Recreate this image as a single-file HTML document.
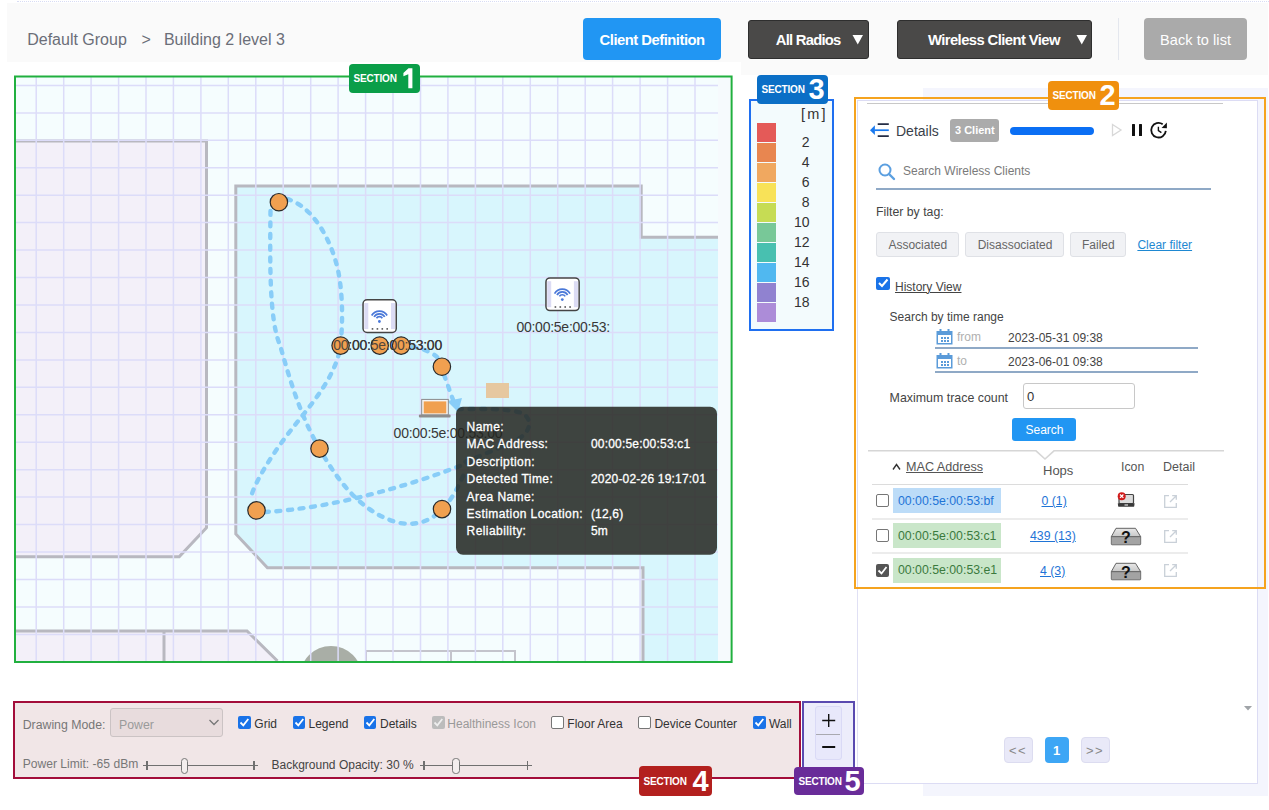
<!DOCTYPE html><html><head><meta charset="utf-8"><style>
html,body{margin:0;padding:0;width:1269px;height:810px;overflow:hidden;background:#fff;font-family:"Liberation Sans", sans-serif;}
.t{position:absolute;white-space:pre;line-height:1;}
.r{position:absolute;box-sizing:border-box;}
svg{position:absolute;}
</style></head><body>

<div class="r" style="left:17px;top:1px;width:1252px;height:2px;border-top:1px dotted #d8dcf4"></div>
<div class="r" style="left:7px;top:3px;width:1261px;height:59px;background:#fafafa"></div>
<div class="r" style="left:741px;top:62px;width:527px;height:13px;background:#fafafa"></div>
<div class="t" style="left:27.2px;top:31.5px;font-size:16px;color:#6b6e78;font-weight:normal;">Default Group</div>
<div class="t" style="left:141.5px;top:31.5px;font-size:16px;color:#6b6e78;font-weight:normal;">&gt;</div>
<div class="t" style="left:163.9px;top:31.5px;font-size:16px;color:#6b6e78;font-weight:normal;">Building 2 level 3</div>
<div class="r" style="left:583px;top:18px;width:138px;height:42px;background:#2196f3;border-radius:4px"></div>
<div class="t" style="left:599.6px;top:32.7px;font-size:14.8px;color:#fff;font-weight:bold;letter-spacing:-0.497px;">Client Definition</div>
<div class="r" style="left:748px;top:19.5px;width:121px;height:39.0px;background:#4a4948;border:1px solid #2e2e2e;border-radius:3px"></div>
<div class="t" style="left:775.8px;top:32.6px;font-size:14.8px;color:#fff;font-weight:bold;letter-spacing:-0.763px;">All Radios</div>
<svg style="left:852px;top:35px" width="12" height="10"><polygon points="0.5,0 11,0 5.75,9.5" fill="#fff"/></svg>
<div class="r" style="left:897px;top:19.5px;width:195px;height:39.0px;background:#4a4948;border:1px solid #2e2e2e;border-radius:3px"></div>
<div class="t" style="left:928.0px;top:32.7px;font-size:14.8px;color:#fff;font-weight:bold;letter-spacing:-0.581px;">Wireless Client View</div>
<svg style="left:1076px;top:35px" width="12" height="10"><polygon points="0.5,0 11,0 5.75,9.5" fill="#fff"/></svg>
<div class="r" style="left:1118px;top:18px;width:1px;height:42px;background:#e4e7ee"></div>
<div class="r" style="left:1144px;top:18px;width:103px;height:42px;background:#aaaaaa;border-radius:4px"></div>
<div class="t" style="left:1160.0px;top:32.9px;font-size:14.5px;color:#fff;font-weight:normal;letter-spacing:0.081px;">Back to list</div>
<svg style="left:0;top:0" width="740" height="670" viewBox="0 0 740 670"><rect x="16" y="77" width="714" height="584" fill="#f6fafd"/><rect x="16" y="77" width="702" height="584" fill="#f5fdfe"/><polygon points="16,141 206.5,141 206.5,527.7 179.2,556.7 16,556.7" fill="#f3f0f9"/><polygon points="16,631 247,631 277.5,661 16,661" fill="#f3f0f9"/><polygon points="235.8,186 641.2,186 641.2,237.3 718,237.3 718,661 643,661 643,567.7 267.4,567.7 235.8,534" fill="#d8f6fd"/><polyline points="16,141 206.5,141 206.5,527.7 179.2,556.7 16,556.7" fill="none" stroke="#b8b8c0" stroke-width="3" stroke-linejoin="miter"/><polyline points="16,631 247,631 277.5,661" fill="none" stroke="#b8b8c0" stroke-width="3" stroke-linejoin="miter"/><polyline points="164,632 164,661" fill="none" stroke="#b8b8c0" stroke-width="3" stroke-linejoin="miter"/><polyline points="718,237.3 641.2,237.3 641.2,186 235.8,186 235.8,534 267.4,567.7 643,567.7 643,661" fill="none" stroke="#b8b8c0" stroke-width="3" stroke-linejoin="miter"/><polyline points="366,661 366,651 515,651 515,661" fill="none" stroke="#c4c4cc" stroke-width="2"/><line x1="451" y1="651" x2="451" y2="661" stroke="#c4c4cc" stroke-width="2"/><clipPath id="mc"><rect x="16" y="77" width="702" height="584"/></clipPath><circle cx="331" cy="677" r="31" fill="#a9aea6" clip-path="url(#mc)"/><g stroke="#dcdcf9" stroke-width="1.5"><line x1="36.2" y1="77" x2="36.2" y2="661"/><line x1="63.7" y1="77" x2="63.7" y2="661"/><line x1="91.1" y1="77" x2="91.1" y2="661"/><line x1="118.6" y1="77" x2="118.6" y2="661"/><line x1="146.0" y1="77" x2="146.0" y2="661"/><line x1="173.4" y1="77" x2="173.4" y2="661"/><line x1="200.9" y1="77" x2="200.9" y2="661"/><line x1="228.3" y1="77" x2="228.3" y2="661"/><line x1="255.8" y1="77" x2="255.8" y2="661"/><line x1="283.2" y1="77" x2="283.2" y2="661"/><line x1="310.7" y1="77" x2="310.7" y2="661"/><line x1="338.1" y1="77" x2="338.1" y2="661"/><line x1="365.6" y1="77" x2="365.6" y2="661"/><line x1="393.0" y1="77" x2="393.0" y2="661"/><line x1="420.5" y1="77" x2="420.5" y2="661"/><line x1="447.9" y1="77" x2="447.9" y2="661"/><line x1="475.4" y1="77" x2="475.4" y2="661"/><line x1="502.8" y1="77" x2="502.8" y2="661"/><line x1="530.3" y1="77" x2="530.3" y2="661"/><line x1="557.7" y1="77" x2="557.7" y2="661"/><line x1="585.2" y1="77" x2="585.2" y2="661"/><line x1="612.6" y1="77" x2="612.6" y2="661"/><line x1="640.1" y1="77" x2="640.1" y2="661"/><line x1="667.6" y1="77" x2="667.6" y2="661"/><line x1="695.0" y1="77" x2="695.0" y2="661"/><line x1="16" y1="85.4" x2="718" y2="85.4"/><line x1="16" y1="112.9" x2="718" y2="112.9"/><line x1="16" y1="140.3" x2="718" y2="140.3"/><line x1="16" y1="167.8" x2="718" y2="167.8"/><line x1="16" y1="195.2" x2="718" y2="195.2"/><line x1="16" y1="222.6" x2="718" y2="222.6"/><line x1="16" y1="250.1" x2="718" y2="250.1"/><line x1="16" y1="277.5" x2="718" y2="277.5"/><line x1="16" y1="305.0" x2="718" y2="305.0"/><line x1="16" y1="332.4" x2="718" y2="332.4"/><line x1="16" y1="359.9" x2="718" y2="359.9"/><line x1="16" y1="387.3" x2="718" y2="387.3"/><line x1="16" y1="414.8" x2="718" y2="414.8"/><line x1="16" y1="442.2" x2="718" y2="442.2"/><line x1="16" y1="469.7" x2="718" y2="469.7"/><line x1="16" y1="497.1" x2="718" y2="497.1"/><line x1="16" y1="524.6" x2="718" y2="524.6"/><line x1="16" y1="552.0" x2="718" y2="552.0"/><line x1="16" y1="579.5" x2="718" y2="579.5"/><line x1="16" y1="607.0" x2="718" y2="607.0"/><line x1="16" y1="634.4" x2="718" y2="634.4"/></g><rect x="15" y="76.5" width="716.6" height="585.5" fill="none" stroke="#21b03f" stroke-width="2"/><path d="M270.5 211 C270 260 269 320 280 345 C290 380 300 415 319.5 448.6 C340 485 365 515 400 523 C425 527 440 515 452 497 C458 488 462 478 466 470" fill="none" stroke="#88cdf8" stroke-width="4.4" stroke-dasharray="4 7.6" stroke-linecap="round"/><path d="M287 199 C310 205 330 235 338 270 C344 300 342 330 340.6 345.6 C336 375 315 400 295 425 C275 450 255 480 250 500" fill="none" stroke="#88cdf8" stroke-width="4.4" stroke-dasharray="4 7.6" stroke-linecap="round"/><path d="M265 512 C300 510 340 503 380 492 C410 484 440 474 470 462" fill="none" stroke="#88cdf8" stroke-width="4.4" stroke-dasharray="4 7.6" stroke-linecap="round"/><path d="M401 346 C415 346 430 350 438 358" fill="none" stroke="#88cdf8" stroke-width="4.4" stroke-dasharray="4 7.6" stroke-linecap="round"/><path d="M444 375 C448 385 451 395 455 405" fill="none" stroke="#88cdf8" stroke-width="4.4" stroke-dasharray="4 7.6" stroke-linecap="round"/><path d="M458 409 C480 409 505 408 522 413 C533 419 531 432 518 439 C500 448 480 456 462 463" fill="none" stroke="#88cdf8" stroke-width="4.4" stroke-dasharray="4 7.6" stroke-linecap="round"/><polygon points="447,401 462,398 458,412" fill="#88cdf8"/><circle cx="278.9" cy="202.2" r="8.7" fill="#f0a050" stroke="#2a2a2a" stroke-width="1.2"/><circle cx="441.9" cy="366.7" r="8.7" fill="#f0a050" stroke="#2a2a2a" stroke-width="1.2"/><circle cx="319.5" cy="448.6" r="8.7" fill="#f0a050" stroke="#2a2a2a" stroke-width="1.2"/><circle cx="256.5" cy="510.4" r="8.7" fill="#f0a050" stroke="#2a2a2a" stroke-width="1.2"/><circle cx="442" cy="509.1" r="8.7" fill="#f0a050" stroke="#2a2a2a" stroke-width="1.2"/><rect x="363.05" y="299.85" width="33.2" height="32.6" rx="4" fill="#fff" stroke="#454545" stroke-width="1.5"/><rect x="364.3" y="303.1" width="4" height="26" fill="#dcdcf4"/><rect x="391.0" y="303.1" width="4" height="26" fill="#dcdcf4"/><path d="M371.66 315.50 A9 9 0 0 1 387.14 315.50" fill="none" stroke="#4a78d8" stroke-width="1.7"/><path d="M374.07 316.90 A6.2 6.2 0 0 1 384.73 316.90" fill="none" stroke="#4a78d8" stroke-width="1.7"/><path d="M376.48 318.30 A3.4 3.4 0 0 1 382.32 318.30" fill="none" stroke="#4a78d8" stroke-width="1.7"/><circle cx="379.40000000000003" cy="321.5" r="1.4" fill="#4a78d8"/><rect x="371.7" y="328.1" width="1.6" height="1.6" fill="#555"/><rect x="376.6" y="328.1" width="1.6" height="1.6" fill="#555"/><rect x="381.5" y="328.1" width="1.6" height="1.6" fill="#555"/><rect x="386.4" y="328.1" width="1.6" height="1.6" fill="#555"/><rect x="545.95" y="277.95" width="33.2" height="32.6" rx="4" fill="#fff" stroke="#454545" stroke-width="1.5"/><rect x="547.2" y="281.2" width="4" height="26" fill="#dcdcf4"/><rect x="573.9000000000001" y="281.2" width="4" height="26" fill="#dcdcf4"/><path d="M554.56 293.60 A9 9 0 0 1 570.04 293.60" fill="none" stroke="#4a78d8" stroke-width="1.7"/><path d="M556.97 295.00 A6.2 6.2 0 0 1 567.63 295.00" fill="none" stroke="#4a78d8" stroke-width="1.7"/><path d="M559.38 296.40 A3.4 3.4 0 0 1 565.22 296.40" fill="none" stroke="#4a78d8" stroke-width="1.7"/><circle cx="562.3000000000001" cy="299.59999999999997" r="1.4" fill="#4a78d8"/><rect x="554.6" y="306.2" width="1.6" height="1.6" fill="#555"/><rect x="559.5" y="306.2" width="1.6" height="1.6" fill="#555"/><rect x="564.4" y="306.2" width="1.6" height="1.6" fill="#555"/><rect x="569.3" y="306.2" width="1.6" height="1.6" fill="#555"/><text x="333.3" y="350" font-family="Liberation Sans, sans-serif" font-size="14" letter-spacing="-0.25" fill="#383838">00:00:5e:00:53:00</text><text x="516.4" y="332" font-family="Liberation Sans, sans-serif" font-size="14" letter-spacing="-0.25" fill="#383838">00:00:5e:00:53:</text><circle cx="340.6" cy="345.6" r="8.7" fill="#f0a050" stroke="#2a2a2a" stroke-width="1.2" opacity="1"/><circle cx="379.7" cy="345.6" r="8.7" fill="#f0a050" stroke="#2a2a2a" stroke-width="1.2" opacity="1"/><circle cx="401.1" cy="345.6" r="8.7" fill="#f0a050" stroke="#2a2a2a" stroke-width="1.2" opacity="1"/><text x="333.3" y="350" font-family="Liberation Sans, sans-serif" font-size="14" letter-spacing="-0.25" fill="#383838" opacity="0.85">00:00:5e:00:53:00</text><rect x="421.7" y="399.4" width="26.6" height="15.6" fill="#f5f5f5" stroke="#8a8a8a" stroke-width="1"/><rect x="423.7" y="401.4" width="22.6" height="12" fill="#f0a050"/><rect x="418.9" y="414.6" width="31.7" height="2.8" rx="1" fill="#8d8d8d"/><text x="393.6" y="437.5" font-family="Liberation Sans, sans-serif" font-size="14" letter-spacing="-0.25" fill="#383838">00:00:5e:00:53:00</text><rect x="486" y="383" width="23" height="15" fill="#e6c8a0"/><rect x="456" y="406.8" width="261" height="148" rx="7" fill="#23241f" fill-opacity="0.85"/><text x="466.6" y="430.9" font-family="Liberation Sans, sans-serif" font-size="12" fill="#fff" stroke="#fff" stroke-width="0.3" letter-spacing="0.42">Name:</text><text x="466.6" y="448.3" font-family="Liberation Sans, sans-serif" font-size="12" fill="#fff" stroke="#fff" stroke-width="0.3" letter-spacing="0.42">MAC Address:</text><text x="590.9" y="448.3" font-family="Liberation Sans, sans-serif" font-size="12" fill="#fff" stroke="#fff" stroke-width="0.3" letter-spacing="0.2">00:00:5e:00:53:c1</text><text x="466.6" y="465.7" font-family="Liberation Sans, sans-serif" font-size="12" fill="#fff" stroke="#fff" stroke-width="0.3" letter-spacing="0.42">Description:</text><text x="466.6" y="483.1" font-family="Liberation Sans, sans-serif" font-size="12" fill="#fff" stroke="#fff" stroke-width="0.3" letter-spacing="0.42">Detected Time:</text><text x="590.9" y="483.1" font-family="Liberation Sans, sans-serif" font-size="12" fill="#fff" stroke="#fff" stroke-width="0.3" letter-spacing="0.2">2020-02-26 19:17:01</text><text x="466.6" y="500.5" font-family="Liberation Sans, sans-serif" font-size="12" fill="#fff" stroke="#fff" stroke-width="0.3" letter-spacing="0.42">Area Name:</text><text x="466.6" y="517.9" font-family="Liberation Sans, sans-serif" font-size="12" fill="#fff" stroke="#fff" stroke-width="0.3" letter-spacing="0.42">Estimation Location:</text><text x="590.9" y="517.9" font-family="Liberation Sans, sans-serif" font-size="12" fill="#fff" stroke="#fff" stroke-width="0.3" letter-spacing="0.2">(12,6)</text><text x="466.6" y="535.3" font-family="Liberation Sans, sans-serif" font-size="12" fill="#fff" stroke="#fff" stroke-width="0.3" letter-spacing="0.42">Reliability:</text><text x="590.9" y="535.3" font-family="Liberation Sans, sans-serif" font-size="12" fill="#fff" stroke="#fff" stroke-width="0.3" letter-spacing="0.2">5m</text></svg>
<div class="r" style="left:749px;top:99px;width:85px;height:232px;background:#f3fbfd;border:2px solid #1f6ff0"></div>
<div class="r" style="left:757px;top:123px;width:19px;height:19px;background:#e45a58"></div>
<div class="r" style="left:757px;top:143px;width:19px;height:19px;background:#e88650"></div>
<div class="r" style="left:757px;top:163px;width:19px;height:19px;background:#f0a860"></div>
<div class="r" style="left:757px;top:183px;width:19px;height:19px;background:#f8e258"></div>
<div class="r" style="left:757px;top:203px;width:19px;height:19px;background:#c6dc54"></div>
<div class="r" style="left:757px;top:223px;width:19px;height:19px;background:#78c898"></div>
<div class="r" style="left:757px;top:243px;width:19px;height:19px;background:#48c0b0"></div>
<div class="r" style="left:757px;top:263px;width:19px;height:19px;background:#50b8f0"></div>
<div class="r" style="left:757px;top:283px;width:19px;height:19px;background:#9082d0"></div>
<div class="r" style="left:757px;top:303px;width:19px;height:19px;background:#ac8cd8"></div>
<div class="t" style="left:801.0px;top:107.2px;font-size:14.5px;color:#333;font-weight:normal;letter-spacing:2.2px">[m]</div>
<div class="t" style="left:801.7px;top:135.1px;font-size:14px;color:#333;font-weight:normal;">2</div>
<div class="t" style="left:801.7px;top:155.1px;font-size:14px;color:#333;font-weight:normal;">4</div>
<div class="t" style="left:801.7px;top:175.1px;font-size:14px;color:#333;font-weight:normal;">6</div>
<div class="t" style="left:801.7px;top:195.1px;font-size:14px;color:#333;font-weight:normal;">8</div>
<div class="t" style="left:793.9px;top:215.1px;font-size:14px;color:#333;font-weight:normal;">10</div>
<div class="t" style="left:793.9px;top:235.1px;font-size:14px;color:#333;font-weight:normal;">12</div>
<div class="t" style="left:793.9px;top:255.1px;font-size:14px;color:#333;font-weight:normal;">14</div>
<div class="t" style="left:793.9px;top:275.1px;font-size:14px;color:#333;font-weight:normal;">16</div>
<div class="t" style="left:793.9px;top:295.1px;font-size:14px;color:#333;font-weight:normal;">18</div>
<div class="r" style="left:923px;top:88px;width:345px;height:708px;background:#f4f5fd"></div>
<div class="r" style="left:857px;top:100px;width:401px;height:684px;background:#fff;border:1px solid #dcdcf4"></div>
<div class="r" style="left:867px;top:103px;width:356px;height:1px;background:#c8c8c8"></div>
<div class="r" style="left:854px;top:97px;width:412px;height:492px;border:2px solid #f5a31f"></div>
<svg style="left:864px;top:115px" width="30" height="28" viewBox="0 0 30 28"><path d="M13.7 9.2 H24.8 M13.7 21.1 H24.8" stroke="#252d45" stroke-width="1.7"/><path d="M10.5 15.2 H24.8" stroke="#1a7af0" stroke-width="1.7"/><polygon points="6,15.2 10.9,10.3 10.9,20.1" fill="#1a7af0"/></svg>
<div class="t" style="left:896.0px;top:124.1px;font-size:14px;color:#3a3f4a;font-weight:normal;">Details</div>
<div class="r" style="left:950px;top:119px;width:49px;height:23px;background:#ababab;border-radius:3px"></div>
<div class="t" style="left:955.0px;top:125.2px;font-size:11px;color:#fff;font-weight:bold;">3 Client</div>
<div class="r" style="left:1010px;top:126.8px;width:84px;height:8.200000000000003px;background:#0b6ff4;border-radius:4px"></div>
<svg style="left:1111px;top:123px" width="12" height="14"><polygon points="1.5,1.5 10,7 1.5,12.5" fill="none" stroke="#d8d8d8" stroke-width="1.3"/></svg>
<div class="r" style="left:1132px;top:124.4px;width:3.2999999999999545px;height:11.400000000000006px;background:#111;border-radius:0.5px"></div>
<div class="r" style="left:1139.2px;top:124.4px;width:3.2999999999999545px;height:11.400000000000006px;background:#111;border-radius:0.5px"></div>
<svg style="left:1148px;top:119px" width="22" height="22" viewBox="0 0 22 22"><path d="M14.7 5.2 A7.3 7.3 0 1 0 17.8 11.8" fill="none" stroke="#111" stroke-width="1.8"/><polygon points="18.9,3.6 13.6,9.1 18.9,9.3" fill="#111"/><path d="M10.4 7.8 V11.6 L13.4 13.6" fill="none" stroke="#111" stroke-width="1.4"/></svg>
<svg style="left:878px;top:162.5px" width="18" height="18" viewBox="0 0 18 18"><circle cx="7" cy="7" r="5.5" fill="none" stroke="#5b9fe0" stroke-width="2"/><path d="M11 11 L16 16" stroke="#5b9fe0" stroke-width="2.4" stroke-linecap="round"/></svg>
<div class="t" style="left:903.0px;top:164.8px;font-size:12px;color:#7a7a7a;font-weight:normal;">Search Wireless Clients</div>
<div class="r" style="left:876px;top:188px;width:335px;height:2px;background:#8fa9c6"></div>
<div class="t" style="left:876.0px;top:205.6px;font-size:12.3px;color:#444;font-weight:normal;">Filter by tag:</div>
<div class="r" style="left:876px;top:232px;width:83px;height:25px;background:#f1f2f5;border:1px solid #dfe1e6;border-radius:3px"></div>
<div class="t" style="left:888.4px;top:239.3px;font-size:12px;color:#666;font-weight:normal;">Associated</div>
<div class="r" style="left:965px;top:232px;width:99px;height:25px;background:#f1f2f5;border:1px solid #dfe1e6;border-radius:3px"></div>
<div class="t" style="left:977.7px;top:239.3px;font-size:12px;color:#666;font-weight:normal;">Disassociated</div>
<div class="r" style="left:1070px;top:232px;width:56px;height:25px;background:#f1f2f5;border:1px solid #dfe1e6;border-radius:3px"></div>
<div class="t" style="left:1082.0px;top:239.3px;font-size:12px;color:#666;font-weight:normal;">Failed</div>
<div class="t" style="left:1137.4px;top:239.3px;font-size:12px;color:#1e88d2;font-weight:normal;text-decoration:underline">Clear filter</div>
<div class="r" style="left:876px;top:276.5px;width:14px;height:13.5px;background:#1a73e8;border-radius:2px"></div>
<svg style="left:876px;top:276px" width="14" height="14"><path d="M3 7 L6 10 L11.5 3.5" fill="none" stroke="#fff" stroke-width="2"/></svg>
<div class="t" style="left:895.0px;top:280.8px;font-size:12px;color:#444;font-weight:normal;text-decoration:underline">History View</div>
<div class="t" style="left:889.6px;top:310.8px;font-size:12px;color:#444;font-weight:normal;">Search by time range</div>
<svg style="left:936px;top:329px" width="17" height="16" viewBox="0 0 17 16"><rect x="0.5" y="2" width="16" height="13.5" fill="#5b9bd9"/><rect x="2" y="6" width="13" height="8" fill="#fff"/><rect x="3.5" y="0" width="2" height="4" fill="#5b9bd9"/><rect x="11.5" y="0" width="2" height="4" fill="#5b9bd9"/><g fill="#5b9bd9"><rect x="5" y="8" width="2" height="2"/><rect x="8" y="8" width="2" height="2"/><rect x="11" y="8" width="2" height="2"/><rect x="5" y="11" width="2" height="2"/><rect x="8" y="11" width="2" height="2"/><rect x="11" y="11" width="2" height="2"/></g></svg>
<div class="t" style="left:957.0px;top:330.8px;font-size:12px;color:#b0b0b0;font-weight:normal;">from</div>
<div class="t" style="left:1008.0px;top:331.8px;font-size:12px;color:#444;font-weight:normal;">2023-05-31 09:38</div>
<div class="r" style="left:935px;top:347px;width:263px;height:2px;background:#8fa9c6"></div>
<svg style="left:936px;top:353px" width="17" height="16" viewBox="0 0 17 16"><rect x="0.5" y="2" width="16" height="13.5" fill="#5b9bd9"/><rect x="2" y="6" width="13" height="8" fill="#fff"/><rect x="3.5" y="0" width="2" height="4" fill="#5b9bd9"/><rect x="11.5" y="0" width="2" height="4" fill="#5b9bd9"/><g fill="#5b9bd9"><rect x="5" y="8" width="2" height="2"/><rect x="8" y="8" width="2" height="2"/><rect x="11" y="8" width="2" height="2"/><rect x="5" y="11" width="2" height="2"/><rect x="8" y="11" width="2" height="2"/><rect x="11" y="11" width="2" height="2"/></g></svg>
<div class="t" style="left:957.0px;top:354.8px;font-size:12px;color:#b0b0b0;font-weight:normal;">to</div>
<div class="t" style="left:1008.0px;top:355.8px;font-size:12px;color:#444;font-weight:normal;">2023-06-01 09:38</div>
<div class="r" style="left:935px;top:371px;width:263px;height:2px;background:#8fa9c6"></div>
<div class="t" style="left:889.6px;top:391.5px;font-size:12.4px;color:#444;font-weight:normal;">Maximum trace count</div>
<div class="r" style="left:1023px;top:382.5px;width:112px;height:26.0px;background:#fff;border:1px solid #c8c8c8;border-radius:3px"></div>
<div class="t" style="left:1027.0px;top:390.0px;font-size:13px;color:#333;font-weight:normal;">0</div>
<div class="r" style="left:1011.5px;top:418px;width:64.5px;height:23px;background:#2196f3;border-radius:3px"></div>
<div class="t" style="left:1025.5px;top:424.3px;font-size:12px;color:#fff;font-weight:normal;">Search</div>
<svg style="left:866px;top:444px" width="360" height="20"><path d="M2 6.8 H170 L179 15 L188 6.8 H358" fill="none" stroke="#d6d6d6" stroke-width="1.6"/></svg>
<svg style="left:892px;top:463px" width="9" height="8"><path d="M1 6.5 L4.5 1.5 L8 6.5" fill="none" stroke="#333" stroke-width="1.4"/></svg>
<div class="t" style="left:906.0px;top:461.3px;font-size:12.6px;color:#555;font-weight:normal;text-decoration:underline">MAC Address</div>
<div class="t" style="left:1043.0px;top:463.5px;font-size:13px;color:#555;font-weight:normal;">Hops</div>
<div class="t" style="left:1121.0px;top:461.1px;font-size:12.3px;color:#555;font-weight:normal;">Icon</div>
<div class="t" style="left:1163.0px;top:460.9px;font-size:12.5px;color:#555;font-weight:normal;">Detail</div>
<div class="r" style="left:872px;top:483.5px;width:316px;height:1.5px;background:#dcdcdc"></div>
<div class="r" style="left:872px;top:518px;width:316px;height:1.5px;background:#ececec"></div>
<div class="r" style="left:872px;top:552px;width:316px;height:1.5px;background:#ececec"></div>
<div class="r" style="left:876px;top:494.0px;width:13px;height:13.0px;background:#fff;border:1px solid #767676;border-radius:2px"></div>
<div class="r" style="left:893px;top:488px;width:107.5px;height:25px;background:#bcdcf8"></div>
<div class="t" style="left:898.0px;top:494.6px;font-size:12.3px;color:#1f74d6;font-weight:normal;">00:00:5e:00:53:bf</div>
<div class="t" style="left:1041.5px;top:495.1px;font-size:12.3px;color:#1f74d6;font-weight:normal;text-decoration:underline">0 (1)</div>
<svg style="left:1163px;top:492.5px" width="16" height="16" viewBox="0 0 16 16"><path d="M6 2.7 H1.7 V14.3 H13.3 V10" fill="none" stroke="#c9d0d8" stroke-width="1.3"/><path d="M7 9 L13.3 2.7 M9.2 2.7 H13.3 V6.8" fill="none" stroke="#c9d0d8" stroke-width="1.3"/></svg>
<div class="r" style="left:876px;top:529.0px;width:13px;height:13.0px;background:#fff;border:1px solid #767676;border-radius:2px"></div>
<div class="r" style="left:893px;top:523px;width:107.5px;height:25px;background:#c9e6c9"></div>
<div class="t" style="left:898.0px;top:529.6px;font-size:12.3px;color:#3b7a3d;font-weight:normal;">00:00:5e:00:53:c1</div>
<div class="t" style="left:1030.0px;top:530.1px;font-size:12.3px;color:#1f74d6;font-weight:normal;text-decoration:underline">439 (13)</div>
<svg style="left:1163px;top:527.5px" width="16" height="16" viewBox="0 0 16 16"><path d="M6 2.7 H1.7 V14.3 H13.3 V10" fill="none" stroke="#c9d0d8" stroke-width="1.3"/><path d="M7 9 L13.3 2.7 M9.2 2.7 H13.3 V6.8" fill="none" stroke="#c9d0d8" stroke-width="1.3"/></svg>
<div class="r" style="left:876px;top:563.7px;width:13px;height:13.0px;background:#555;border-radius:2px"></div>
<svg style="left:876px;top:563.7px" width="13" height="13"><path d="M2.5 6.5 L5.5 9.5 L10.5 3" fill="none" stroke="#fff" stroke-width="1.8"/></svg>
<div class="r" style="left:893px;top:557.7px;width:107.5px;height:25.0px;background:#c9e6c9"></div>
<div class="t" style="left:898.0px;top:564.3px;font-size:12.3px;color:#3b7a3d;font-weight:normal;">00:00:5e:00:53:e1</div>
<div class="t" style="left:1040.0px;top:564.8px;font-size:12.3px;color:#1f74d6;font-weight:normal;text-decoration:underline">4 (3)</div>
<svg style="left:1163px;top:562.2px" width="16" height="16" viewBox="0 0 16 16"><path d="M6 2.7 H1.7 V14.3 H13.3 V10" fill="none" stroke="#c9d0d8" stroke-width="1.3"/><path d="M7 9 L13.3 2.7 M9.2 2.7 H13.3 V6.8" fill="none" stroke="#c9d0d8" stroke-width="1.3"/></svg>
<svg style="left:1116px;top:490px" width="22" height="20" viewBox="0 0 22 20"><rect x="3" y="4.5" width="14.5" height="9" rx="1" fill="#dcdcdc" stroke="#444" stroke-width="1.2"/><path d="M1.8 13.2 H18.6 L18.2 16.2 Q18 16.8 17.4 16.8 H3 Q2.4 16.8 2.2 16.2 Z" fill="#3a3a3a"/><rect x="8.5" y="14.4" width="3.5" height="1.2" fill="#ddd"/><circle cx="5.7" cy="6.2" r="4" fill="#d21c1c"/><path d="M4 4.5 L7.4 7.9 M7.4 4.5 L4 7.9" stroke="#fff" stroke-width="1.2"/></svg>
<svg style="left:1110px;top:527px" width="32" height="19" viewBox="0 0 32 19"><defs><linearGradient id="qg" x1="0" y1="0" x2="0" y2="1"><stop offset="0" stop-color="#e8e8e8"/><stop offset="1" stop-color="#c8c8c8"/></linearGradient></defs><path d="M6 1.3 H25.5 L30.7 9.7 H1.3 Z" fill="url(#qg)" stroke="#555" stroke-width="0.9"/><path d="M1.3 9.7 H30.7 V17 Q30.7 17.8 30 17.8 H2 Q1.3 17.8 1.3 17 Z" fill="#a3a3a3" stroke="#666" stroke-width="0.9"/><text x="16" y="15.5" text-anchor="middle" font-family="Liberation Sans" font-weight="bold" font-size="16" fill="#111">?</text></svg>
<svg style="left:1110px;top:562px" width="32" height="19" viewBox="0 0 32 19"><defs><linearGradient id="qg" x1="0" y1="0" x2="0" y2="1"><stop offset="0" stop-color="#e8e8e8"/><stop offset="1" stop-color="#c8c8c8"/></linearGradient></defs><path d="M6 1.3 H25.5 L30.7 9.7 H1.3 Z" fill="url(#qg)" stroke="#555" stroke-width="0.9"/><path d="M1.3 9.7 H30.7 V17 Q30.7 17.8 30 17.8 H2 Q1.3 17.8 1.3 17 Z" fill="#a3a3a3" stroke="#666" stroke-width="0.9"/><text x="16" y="15.5" text-anchor="middle" font-family="Liberation Sans" font-weight="bold" font-size="16" fill="#111">?</text></svg>
<svg style="left:1243px;top:705px" width="10" height="7"><polygon points="1,1 9,1 5,5.5" fill="#a0a4a8"/></svg>
<div class="r" style="left:1004px;top:737px;width:29px;height:26px;background:#e9e9f8;border:1px solid #dcdcf0;border-radius:4px"></div>
<div class="t" style="left:1009.0px;top:744.0px;font-size:13px;color:#888;font-weight:normal;letter-spacing:1.5px">&lt;&lt;</div>
<div class="r" style="left:1044.5px;top:737px;width:24.5px;height:26px;background:#3da6f5;border-radius:4px"></div>
<div class="t" style="left:1053.0px;top:744.0px;font-size:13px;color:#fff;font-weight:bold;">1</div>
<div class="r" style="left:1081px;top:737px;width:29px;height:26px;background:#e9e9f8;border:1px solid #dcdcf0;border-radius:4px"></div>
<div class="t" style="left:1086.0px;top:744.0px;font-size:13px;color:#888;font-weight:normal;letter-spacing:1.5px">&gt;&gt;</div>
<div class="r" style="left:13px;top:701px;width:788px;height:78px;background:#f1e6e7;border:2px solid #a30d3a"></div>
<div class="t" style="left:22.7px;top:718.6px;font-size:12.3px;color:#777;font-weight:normal;">Drawing Mode:</div>
<div class="r" style="left:110px;top:707.5px;width:113px;height:29.0px;background:#e8dcdd;border:1px solid #cbc3c4;border-radius:3px"></div>
<div class="t" style="left:119.0px;top:718.6px;font-size:12.3px;color:#9a9a9a;font-weight:normal;">Power</div>
<svg style="left:208px;top:718px" width="12" height="9"><path d="M1.5 2 L6 6.5 L10.5 2" fill="none" stroke="#777" stroke-width="1.3"/></svg>
<div class="r" style="left:238.2px;top:716px;width:12.5px;height:12.5px;background:#1a73e8;border-radius:2px"></div>
<svg style="left:238.2px;top:716px" width="13" height="13"><path d="M2.5 6.5 L5.3 9.3 L10.3 3" fill="none" stroke="#fff" stroke-width="1.8"/></svg>
<div class="t" style="left:254.3px;top:718.3px;font-size:12px;color:#333;font-weight:normal;">Grid</div>
<div class="r" style="left:292.5px;top:716px;width:12.5px;height:12.5px;background:#1a73e8;border-radius:2px"></div>
<svg style="left:292.5px;top:716px" width="13" height="13"><path d="M2.5 6.5 L5.3 9.3 L10.3 3" fill="none" stroke="#fff" stroke-width="1.8"/></svg>
<div class="t" style="left:308.5px;top:718.3px;font-size:12px;color:#333;font-weight:normal;">Legend</div>
<div class="r" style="left:363.5px;top:716px;width:12.5px;height:12.5px;background:#1a73e8;border-radius:2px"></div>
<svg style="left:363.5px;top:716px" width="13" height="13"><path d="M2.5 6.5 L5.3 9.3 L10.3 3" fill="none" stroke="#fff" stroke-width="1.8"/></svg>
<div class="t" style="left:380.0px;top:718.3px;font-size:12px;color:#333;font-weight:normal;">Details</div>
<div class="r" style="left:432px;top:716px;width:12.5px;height:12.5px;background:#bcbcbc;border-radius:2px"></div>
<svg style="left:432px;top:716px" width="13" height="13"><path d="M2.5 6.5 L5.3 9.3 L10.3 3" fill="none" stroke="#eee" stroke-width="1.8"/></svg>
<div class="t" style="left:447.3px;top:718.3px;font-size:12px;color:#999;font-weight:normal;">Healthiness Icon</div>
<div class="r" style="left:551px;top:716.3px;width:12.5px;height:12.5px;background:#fff;border:1px solid #767676;border-radius:2px"></div>
<div class="t" style="left:567.3px;top:718.3px;font-size:12px;color:#333;font-weight:normal;">Floor Area</div>
<div class="r" style="left:638px;top:716.3px;width:12.5px;height:12.5px;background:#fff;border:1px solid #767676;border-radius:2px"></div>
<div class="t" style="left:654.4px;top:718.3px;font-size:12px;color:#333;font-weight:normal;">Device Counter</div>
<div class="r" style="left:753px;top:716.3px;width:12.5px;height:12.5px;background:#1a73e8;border-radius:2px"></div>
<svg style="left:753px;top:716.3px" width="13" height="13"><path d="M2.5 6.5 L5.3 9.3 L10.3 3" fill="none" stroke="#fff" stroke-width="1.8"/></svg>
<div class="t" style="left:768.9px;top:718.3px;font-size:12px;color:#333;font-weight:normal;">Wall</div>
<div class="t" style="left:22.7px;top:758.3px;font-size:12.1px;color:#777;font-weight:normal;">Power Limit: -65 dBm</div>
<div class="r" style="left:143px;top:764.75px;width:115px;height:1.5px;background:#707070"></div>
<div class="r" style="left:146px;top:761.0px;width:1.5px;height:9.0px;background:#707070"></div>
<div class="r" style="left:253px;top:761.0px;width:1.5px;height:9.0px;background:#707070"></div>
<div class="r" style="left:180.5px;top:757.5px;width:7.5px;height:16.0px;background:#f4eeee;border:1px solid #777;border-radius:3.5px"></div>
<div class="t" style="left:271.5px;top:758.8px;font-size:12px;color:#444;font-weight:normal;">Background Opacity: 30 %</div>
<div class="r" style="left:420px;top:764.75px;width:111.5px;height:1.5px;background:#707070"></div>
<div class="r" style="left:423px;top:761.0px;width:1.5px;height:9.0px;background:#707070"></div>
<div class="r" style="left:526.5px;top:761.0px;width:1.5px;height:9.0px;background:#707070"></div>
<div class="r" style="left:452px;top:757.5px;width:7.5px;height:16.0px;background:#f4eeee;border:1px solid #777;border-radius:3.5px"></div>
<div class="r" style="left:802px;top:701px;width:53px;height:71px;background:#ededfb;border:2px solid #5a4ab0"></div>
<div class="r" style="left:814.5px;top:706px;width:27.0px;height:54px;background:#e8e8fb;border:1px solid #dadaf6;border-radius:3px"></div>
<div class="r" style="left:816px;top:734px;width:24px;height:1.2000000000000455px;background:#a9a9b0"></div>
<svg style="left:820px;top:712px" width="18" height="40"><path d="M2.2 8.5 H15.2 M8.7 2 V15" stroke="#111" stroke-width="1.4"/><path d="M2.2 35 H15.2" stroke="#111" stroke-width="2"/></svg>
<div class="r" style="left:857px;top:589px;width:1px;height:201px;background:#e0e0f4"></div>
<div class="r" style="left:349px;top:64px;width:71px;height:29px;background:#0a9e48;border-radius:4px"></div>
<div class="t" style="left:353.4px;top:74.2px;font-size:10px;font-weight:bold;color:#fff;letter-spacing:-0.15px">SECTION</div>
<svg style="left:349px;top:64px" width="71" height="29"><polygon points="59.5,4.2 63.4,4.2 63.4,24.2 59.3,24.2 59.3,10.3 54.4,12.3 54.4,8.9" fill="#fff"/></svg>
<div class="r" style="left:757px;top:75px;width:71px;height:29px;background:#0b6fc6;border-radius:4px"></div>
<div class="t" style="left:761.4px;top:85.2px;font-size:10px;font-weight:bold;color:#fff;letter-spacing:-0.15px">SECTION</div>
<div class="t" style="left:808.5px;top:75.3px;font-size:29px;font-weight:bold;color:#fff">3</div>
<div class="r" style="left:1048px;top:81px;width:71px;height:29px;background:#f0900e;border-radius:4px"></div>
<div class="t" style="left:1052.4px;top:91.2px;font-size:10px;font-weight:bold;color:#fff;letter-spacing:-0.15px">SECTION</div>
<div class="t" style="left:1099.5px;top:81.3px;font-size:29px;font-weight:bold;color:#fff">2</div>
<div class="r" style="left:639px;top:766px;width:73px;height:30px;background:#b3201e;border-radius:4px"></div>
<div class="t" style="left:643.4px;top:776.7px;font-size:10px;font-weight:bold;color:#fff;letter-spacing:-0.15px">SECTION</div>
<div class="t" style="left:692.5px;top:766.8px;font-size:29px;font-weight:bold;color:#fff">4</div>
<div class="r" style="left:794px;top:767px;width:70px;height:28px;background:#692c99;border-radius:4px"></div>
<div class="t" style="left:798.4px;top:776.7px;font-size:10px;font-weight:bold;color:#fff;letter-spacing:-0.15px">SECTION</div>
<div class="t" style="left:844.5px;top:766.8px;font-size:29px;font-weight:bold;color:#fff">5</div>
</body></html>
